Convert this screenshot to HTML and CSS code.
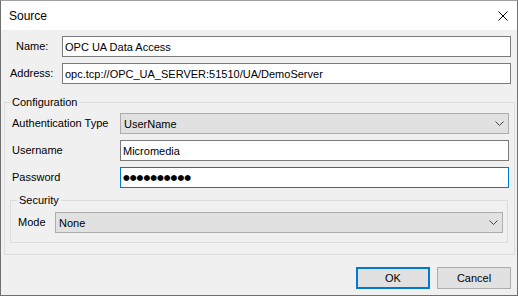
FILE: index.html
```html
<!DOCTYPE html>
<html lang="en">
<head>
    <meta charset="UTF-8">
    <title>Source</title>
    <link rel="stylesheet" href="styles.css">
</head>
<body>
    <div class="window">
        <div class="titlebar">
            <span class="title">Source</span>
            <svg class="close" width="10" height="10" viewBox="0 0 10 10">
                <path d="M0.5 0.5 L9.5 9.5 M9.5 0.5 L0.5 9.5" stroke="#000" stroke-width="1" fill="none"/>
            </svg>
        </div>
        <div class="content">
            <div class="row top-row">
                <label class="lbl lbl-name">Name:</label>
                <div class="textbox">OPC UA Data Access</div>
            </div>
            <div class="row top-row">
                <label class="lbl lbl-address">Address:</label>
                <div class="textbox">opc.tcp://OPC_UA_SERVER:51510/UA/DemoServer</div>
            </div>

            <fieldset class="group config">
                <legend>Configuration</legend>
                <div class="row">
                    <label class="lbl lbl-wide">Authentication Type</label>
                    <div class="combo">
                        <span>UserName</span>
                        <svg class="chevron" width="9" height="5" viewBox="0 0 9 5">
                            <path d="M0.5 0.5 L4.5 4.5 L8.5 0.5" stroke="#444" stroke-width="1" fill="none"/>
                        </svg>
                    </div>
                </div>
                <div class="row">
                    <label class="lbl lbl-wide">Username</label>
                    <div class="textbox">Micromedia</div>
                </div>
                <div class="row">
                    <label class="lbl lbl-wide">Password</label>
                    <div class="textbox focused"><span class="dots">●●●●●●●●●●</span></div>
                </div>

                <fieldset class="group security">
                    <legend>Security</legend>
                    <div class="row">
                        <label class="lbl lbl-mode">Mode</label>
                        <div class="combo">
                            <span>None</span>
                            <svg class="chevron" width="9" height="5" viewBox="0 0 9 5">
                                <path d="M0.5 0.5 L4.5 4.5 L8.5 0.5" stroke="#444" stroke-width="1" fill="none"/>
                            </svg>
                        </div>
                    </div>
                </fieldset>
            </fieldset>

            <div class="buttons">
                <button class="btn default">OK</button>
                <button class="btn">Cancel</button>
            </div>
        </div>
    </div>
</body>
</html>
```

FILE: styles.css
```css
body {
    margin: 0;
    background: #f0f0f0;
}
.window {
    width: 518px;
    height: 296px;
    box-sizing: border-box;
    border: 1px solid #707070;
    border-top-color: #a0a0a0;
    background: #f0f0f0;
    display: flex;
    flex-direction: column;
    font-family: "Liberation Sans", Arial, sans-serif;
    font-size: 11px;
    color: #000;
}
.titlebar {
    height: 29px;
    background: #fff;
    display: flex;
    align-items: center;
    justify-content: space-between;
    padding: 0 9px 0 8px;
}
.title {
    font-size: 12px;
    margin-top: 1px;
}
.close {
    margin-top: 1px;
}
.content {
    flex: 1;
    display: flex;
    flex-direction: column;
    padding: 6px 0 6px 0;
}
.row {
    display: flex;
    align-items: center;
    margin-bottom: 6px;
}
.top-row {
    padding-right: 6px;
}
.lbl {
    flex: none;
    box-sizing: border-box;
    line-height: 13px;
}
.lbl-name {
    width: 61px;
    padding-left: 15px;
}
.lbl-address {
    width: 61px;
    padding-left: 9px;
}
.lbl-wide {
    width: 110px;
    padding-left: 2px;
}
.lbl-mode {
    width: 38px;
    padding-left: 1px;
}
.textbox,
.combo {
    flex: 1;
    height: 21px;
    box-sizing: border-box;
    display: flex;
    align-items: center;
    white-space: nowrap;
    overflow: hidden;
}
.textbox {
    background: #fff;
    border: 1px solid #7a7a7a;
    padding-left: 2px;
}
.textbox.focused {
    border-color: #0078d7;
}
.dots {
    font-family: "DejaVu Sans", sans-serif;
    font-size: 7.8px;
}
.combo {
    background: #e1e1e1;
    border: 1px solid #adadad;
    padding: 0 4px 0 3px;
    justify-content: space-between;
}
.group {
    margin: 0;
    border: 1px solid #dcdcdc;
    min-width: 0;
}
.group legend {
    padding: 0 2px;
    line-height: 13px;
}
.config {
    margin: 6px 2px 0 3px;
    padding: 4px 5px 11px 5px;
}
.security {
    margin: 0 1px 0 0;
    padding: 5px 4px 4px 6px;
}
.security .row {
    margin-bottom: 5px;
}
.buttons {
    margin-top: auto;
    display: flex;
    justify-content: flex-end;
    gap: 7px;
    padding-right: 6px;
}
.btn {
    width: 74px;
    height: 22px;
    box-sizing: border-box;
    background: #e1e1e1;
    border: 1px solid #adadad;
    font-family: "Liberation Sans", Arial, sans-serif;
    font-size: 11px;
    color: #000;
    padding: 0;
}
.btn.default {
    border: 2px solid #0078d7;
}
```
